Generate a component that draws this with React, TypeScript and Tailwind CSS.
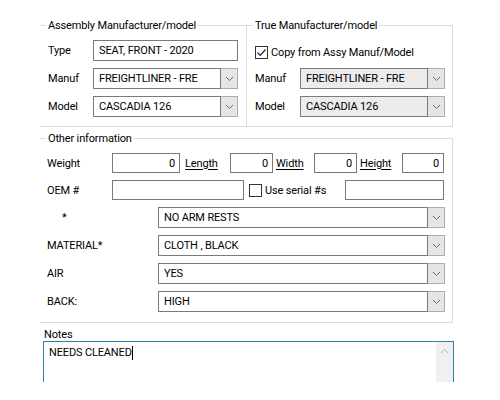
import React from "react";

const Chevron = () => (
  <svg width="9" height="6" viewBox="0 0 9 6" fill="none">
    <polyline points="1,1 4.5,4.5 8,1" stroke="#6b6b6b" strokeWidth="1" />
  </svg>
);

function Combo({ value, textW, grey }: { value: string; textW: string; grey?: boolean }) {
  return (
    <div className="flex h-[21px]">
      <div
        className={`${textW} h-full border border-[#7a7a7a] ${grey ? "bg-[#ececec]" : "bg-white"} flex items-center pl-[5px] whitespace-nowrap`}
      >
        {value}
      </div>
      <div className="w-[17px] h-full border border-[#adadad] border-l-0 bg-[#e5e5e5] flex items-center justify-center">
        <Chevron />
      </div>
    </div>
  );
}

function Box({ w, value, right }: { w: string; value?: string; right?: boolean }) {
  return (
    <div
      className={`${w} h-[20px] border border-[#7a7a7a] bg-white flex items-center ${right ? "justify-end pr-[4px]" : "pl-[5px]"} whitespace-nowrap`}
    >
      {value}
    </div>
  );
}

function Check({ checked }: { checked?: boolean }) {
  return (
    <div className="w-[13px] h-[13px] border border-[#333] bg-white flex items-center justify-center">
      {checked && (
        <svg width="11" height="11" viewBox="0 0 11 11" fill="none">
          <polyline points="1.5,5.5 4.2,8.3 9.5,2.5" stroke="#222" strokeWidth="1.2" />
        </svg>
      )}
    </div>
  );
}

function Title({ children }: { children: React.ReactNode }) {
  return (
    <span className="absolute top-[-7px] left-[6px] bg-white px-[2px] leading-[13px] whitespace-nowrap">
      {children}
    </span>
  );
}

export default function App() {
  return (
    <div className="w-[500px] h-[400px] bg-white overflow-hidden text-[11px] text-black [font-family:Roboto,sans-serif] tracking-[-0.15px] leading-none">
      <div className="h-[382px] overflow-hidden pt-[25px]">
        {/* Top two groups */}
        <div className="flex pl-[40px]">
          <div className="relative w-[207px] h-[102px] border-t border-r border-b border-[#dcdcdc] pt-[14px] pl-[8px]">
            <Title>Assembly Manufacturer/model</Title>
            <div className="flex flex-col gap-[7px]">
              <div className="flex items-center h-[21px]">
                <div className="w-[45px]">Type</div>
                <div className="w-[145px] h-[21px] border border-[#7a7a7a] flex items-center pl-[5px] whitespace-nowrap">
                  SEAT, FRONT - 2020
                </div>
              </div>
              <div className="flex items-center">
                <div className="w-[45px]">Manuf</div>
                <Combo value="FREIGHTLINER - FRE" textW="w-[128px]" />
              </div>
              <div className="flex items-center">
                <div className="w-[45px]">Model</div>
                <Combo value="CASCADIA 126" textW="w-[128px]" />
              </div>
            </div>
          </div>
          <div className="relative w-[206px] h-[102px] border-t border-r border-b border-[#dcdcdc] pt-[20px] pl-[8px]">
            <Title>True Manufacturer/model</Title>
            <div className="flex items-center gap-[3px] h-[13px]">
              <Check checked />
              <span>Copy from Assy Manuf/Model</span>
            </div>
            <div className="flex flex-col gap-[7px] mt-[9px]">
              <div className="flex items-center">
                <div className="w-[45px]">Manuf</div>
                <Combo value="FREIGHTLINER - FRE" textW="w-[128px]" grey />
              </div>
              <div className="flex items-center">
                <div className="w-[45px]">Model</div>
                <Combo value="CASCADIA 126" textW="w-[128px]" grey />
              </div>
            </div>
          </div>
        </div>

        {/* Other information */}
        <div className="relative ml-[40px] mt-[11px] w-[413px] h-[185px] border-t border-r border-b border-[#dcdcdc] pt-[14px] pl-[7px]">
          <Title>Other information</Title>
          <div className="flex flex-col gap-[7px]">
            <div className="flex items-center h-[20px]">
              <div className="w-[65px]">Weight</div>
              <Box w="w-[68px]" value="0" right />
              <div className="w-[50px] pl-[5px] underline underline-offset-2">Length</div>
              <Box w="w-[43px]" value="0" right />
              <div className="w-[41px] pl-[3px] underline underline-offset-2">Width</div>
              <Box w="w-[43px]" value="0" right />
              <div className="w-[45px] pl-[3px] underline underline-offset-2">Height</div>
              <Box w="w-[42px]" value="0" right />
            </div>
            <div className="flex items-center h-[20px]">
              <div className="w-[65px]">OEM #</div>
              <Box w="w-[132px]" />
              <div className="w-[101px] pl-[5px] flex items-center gap-[3px]">
                <Check />
                <span>Use serial #s</span>
              </div>
              <Box w="w-[99px]" />
            </div>
            <div className="flex items-center">
              <div className="w-[111px] pl-[15px]">*</div>
              <Combo value="NO ARM RESTS" textW="w-[270px]" />
            </div>
            <div className="flex items-center">
              <div className="w-[111px]">MATERIAL*</div>
              <Combo value="CLOTH , BLACK" textW="w-[270px]" />
            </div>
            <div className="flex items-center">
              <div className="w-[111px]">AIR</div>
              <Combo value="YES" textW="w-[270px]" />
            </div>
            <div className="flex items-center">
              <div className="w-[111px]">BACK:</div>
              <Combo value="HIGH" textW="w-[270px]" />
            </div>
          </div>
        </div>

        {/* Notes */}
        <div className="ml-[43px] mt-[6px]">
          <div className="leading-[12px] pl-[1px]">Notes</div>
          <div className="w-[411px] h-[60px] border border-[#2f7fa8] flex">
            <div className="flex-1 pl-[5px] pt-[4px] flex items-start">
              <span className="leading-[14px]">NEEDS CLEANED</span>
              <span className="w-[1px] h-[14px] bg-black" />
            </div>
            <div className="w-[17px] h-full bg-[#f0f0f0] flex justify-center pt-[6px]">
              <svg width="9" height="6" viewBox="0 0 9 6" fill="none">
                <polyline points="1,5 4.5,1.5 8,5" stroke="#b5b5b5" strokeWidth="1" />
              </svg>
            </div>
          </div>
        </div>
      </div>
    </div>
  );
}
